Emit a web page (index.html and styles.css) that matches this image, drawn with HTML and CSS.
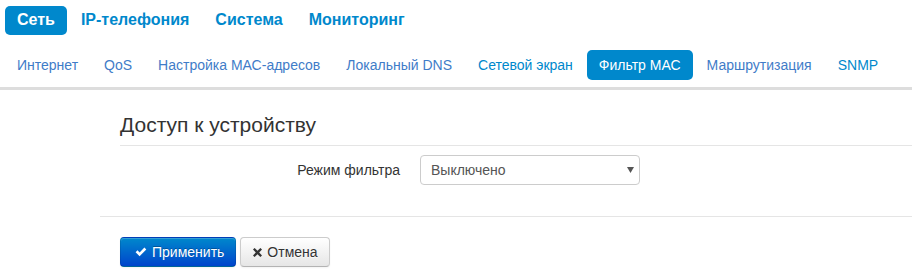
FILE: index.html
```html
<!DOCTYPE html>
<html lang="ru">
<head>
  <meta charset="UTF-8" />
  <title>Фильтр MAC</title>
  <link rel="stylesheet" href="styles.css">
</head>
<body>
  <nav class="top-nav">
    <a class="active" href="#">Сеть</a>
    <a href="#">IP-телефония</a>
    <a href="#">Система</a>
    <a href="#">Мониторинг</a>
  </nav>

  <nav class="sub-nav">
    <a class="visited" href="#">Интернет</a>
    <a class="visited" href="#">QoS</a>
    <a class="visited" href="#">Настройка МАС-адресов</a>
    <a class="visited" href="#">Локальный DNS</a>
    <a href="#">Сетевой экран</a>
    <a class="active" href="#">Фильтр МАС</a>
    <a class="visited" href="#">Маршрутизация</a>
    <a href="#">SNMP</a>
  </nav>

  <main class="content">
    <section class="group">
      <h2 class="legend">Доступ к устройству</h2>
      <div class="control-group">
        <label for="mode">Режим фильтра</label>
        <div class="select-wrap">
          <select id="mode">
            <option>Выключено</option>
            <option>Разрешить</option>
            <option>Запретить</option>
          </select>
          <svg class="caret" width="7" height="6" viewBox="0 0 7 6"><path d="M0 0H7L3.5 6Z" fill="#555"/></svg>
        </div>
      </div>
    </section>

    <div class="form-actions">
      <button class="btn btn-primary">
        <svg width="12" height="10" viewBox="0 0 12 10"><path d="M0.6 5.2L2.5 3.3L4.6 5.4L9.4 0.6L11.3 2.5L4.6 9.2Z" fill="#fff"/></svg>
        Применить
      </button><button class="btn">
        <svg width="9" height="9" viewBox="0 0 9 9"><path d="M1.6 0L4.5 2.8L7.4 0L9 1.6L6.2 4.5L9 7.4L7.4 9L4.5 6.2L1.6 9L0 7.4L2.8 4.5L0 1.6Z" fill="#333"/></svg>
        Отмена
      </button>
    </div>
  </main>
</body>
</html>
```

FILE: styles.css
```css
body {
  margin: 0;
  font-family: "Liberation Sans", Arial, sans-serif;
  font-size: 14px;
  color: #333;
  background: #fff;
}
a {
  text-decoration: none;
}
.top-nav, .sub-nav {
  display: flex;
  gap: 2px;
  padding: 0 5px;
}
.top-nav {
  padding-top: 6px;
}
.top-nav a {
  height: 29px;
  line-height: 28px;
  padding: 0 12px;
  border-radius: 5px;
  font-size: 16px;
  font-weight: bold;
  color: #0088cc;
}
.sub-nav {
  margin-top: 15px;
  padding-bottom: 7px;
  border-bottom: 3px solid #ddd;
}
.sub-nav a {
  height: 30px;
  line-height: 31px;
  padding: 0 12px;
  border-radius: 5px;
  color: #0088cc;
}
.sub-nav a.visited {
  color: #3f7cc8;
}
.top-nav a.active, .sub-nav a.active {
  background: #0088cc;
  color: #fff;
}
.content {
  margin-left: 100px;
}
.group {
  padding-left: 20px;
}
.legend {
  margin: 15px 0 0;
  height: 40px;
  line-height: 40px;
  font-size: 21px;
  font-weight: normal;
  color: #333;
  border-bottom: 1px solid #e5e5e5;
}
.control-group {
  display: grid;
  grid-template-columns: 160px 220px;
  column-gap: 20px;
  margin: 9px 0 0 120px;
}
.control-group label {
  text-align: right;
  line-height: 31px;
}
.select-wrap {
  position: relative;
}
.select-wrap select {
  display: block;
  box-sizing: border-box;
  width: 220px;
  height: 30px;
  padding: 0 0 0 10px;
  font-family: inherit;
  font-size: 14px;
  color: #555;
  background: #fff;
  border: 1px solid #ccc;
  border-radius: 4px;
  appearance: none;
  -webkit-appearance: none;
}
.caret {
  position: absolute;
  right: 6px;
  top: 12px;
}
.form-actions {
  margin-top: 30px;
  padding: 20px;
  border-top: 1px solid #e5e5e5;
}
.btn {
  display: inline-flex;
  align-items: center;
  gap: 5px;
  height: 30px;
  padding: 0 11px 0 12px;
  font-family: inherit;
  font-size: 14px;
  color: #333;
  background: linear-gradient(#ffffff, #e6e6e6);
  border: 1px solid #ccc;
  border-bottom-color: #b3b3b3;
  border-radius: 4px;
  box-shadow: inset 0 1px 0 rgba(255, 255, 255, 0.2), 0 1px 2px rgba(0, 0, 0, 0.05);
  text-shadow: 0 1px 1px rgba(255, 255, 255, 0.75);
  margin-right: 4px;
  vertical-align: top;
}
.btn-primary {
  padding: 0 11px 0 14px;
  color: #fff;
  background: linear-gradient(#0088cc, #0044cc);
  border-color: rgba(0, 0, 0, 0.1) rgba(0, 0, 0, 0.1) rgba(0, 0, 0, 0.25);
  text-shadow: 0 -1px 0 rgba(0, 0, 0, 0.25);
}
```
